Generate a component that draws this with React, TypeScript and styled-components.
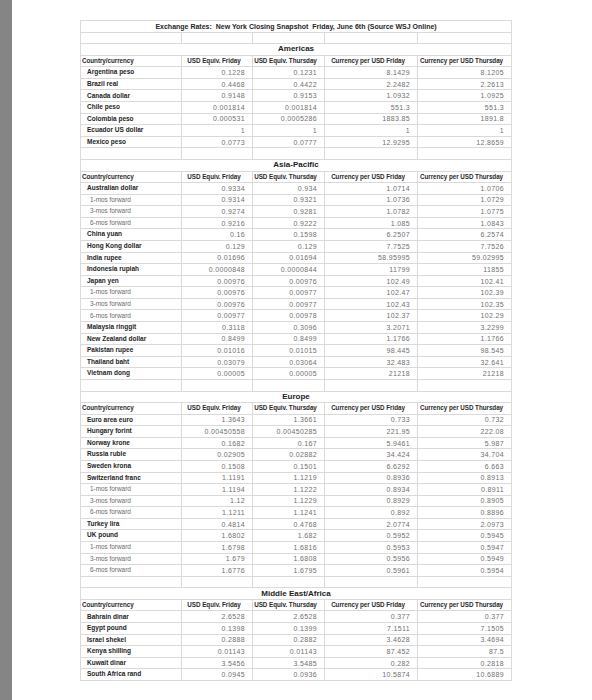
import React from 'react';
import styled, { createGlobalStyle } from 'styled-components';

const GlobalStyle = createGlobalStyle`
  html, body {
    margin: 0;
    padding: 0;
    background: #ffffff;
  }
  body {
    font-family: "Liberation Sans", Arial, sans-serif;
  }
`;

type Row = {
  label: string;
  sub?: boolean;
  values: string[];
};

type Section = {
  name: string;
  rows: Row[];
};

const sections: Section[] = [
  {
    name: 'Americas',
    rows: [
      { label: 'Argentina peso', values: ['0.1228', '0.1231', '8.1429', '8.1205'] },
      { label: 'Brazil real', values: ['0.4468', '0.4422', '2.2482', '2.2613'] },
      { label: 'Canada dollar', values: ['0.9148', '0.9153', '1.0932', '1.0925'] },
      { label: 'Chile peso', values: ['0.001814', '0.001814', '551.3', '551.3'] },
      { label: 'Colombia peso', values: ['0.000531', '0.0005286', '1883.85', '1891.8'] },
      { label: 'Ecuador US dollar', values: ['1', '1', '1', '1'] },
      { label: 'Mexico peso', values: ['0.0773', '0.0777', '12.9295', '12.8659'] },
    ],
  },
  {
    name: 'Asia-Pacific',
    rows: [
      { label: 'Australian dollar', values: ['0.9334', '0.934', '1.0714', '1.0706'] },
      { label: '1-mos forward', sub: true, values: ['0.9314', '0.9321', '1.0736', '1.0729'] },
      { label: '3-mos forward', sub: true, values: ['0.9274', '0.9281', '1.0782', '1.0775'] },
      { label: '6-mos forward', sub: true, values: ['0.9216', '0.9222', '1.085', '1.0843'] },
      { label: 'China yuan', values: ['0.16', '0.1598', '6.2507', '6.2574'] },
      { label: 'Hong Kong dollar', values: ['0.129', '0.129', '7.7525', '7.7526'] },
      { label: 'India rupee', values: ['0.01696', '0.01694', '58.95995', '59.02995'] },
      { label: 'Indonesia rupiah', values: ['0.0000848', '0.0000844', '11799', '11855'] },
      { label: 'Japan yen', values: ['0.00976', '0.00976', '102.49', '102.41'] },
      { label: '1-mos forward', sub: true, values: ['0.00976', '0.00977', '102.47', '102.39'] },
      { label: '3-mos forward', sub: true, values: ['0.00976', '0.00977', '102.43', '102.35'] },
      { label: '6-mos forward', sub: true, values: ['0.00977', '0.00978', '102.37', '102.29'] },
      { label: 'Malaysia ringgit', values: ['0.3118', '0.3096', '3.2071', '3.2299'] },
      { label: 'New Zealand dollar', values: ['0.8499', '0.8499', '1.1766', '1.1766'] },
      { label: 'Pakistan rupee', values: ['0.01016', '0.01015', '98.445', '98.545'] },
      { label: 'Thailand baht', values: ['0.03079', '0.03064', '32.483', '32.641'] },
      { label: 'Vietnam dong', values: ['0.00005', '0.00005', '21218', '21218'] },
    ],
  },
  {
    name: 'Europe',
    rows: [
      { label: 'Euro area euro', values: ['1.3643', '1.3661', '0.733', '0.732'] },
      { label: 'Hungary forint', values: ['0.00450558', '0.00450285', '221.95', '222.08'] },
      { label: 'Norway krone', values: ['0.1682', '0.167', '5.9461', '5.987'] },
      { label: 'Russia ruble', values: ['0.02905', '0.02882', '34.424', '34.704'] },
      { label: 'Sweden krona', values: ['0.1508', '0.1501', '6.6292', '6.663'] },
      { label: 'Switzerland franc', values: ['1.1191', '1.1219', '0.8936', '0.8913'] },
      { label: '1-mos forward', sub: true, values: ['1.1194', '1.1222', '0.8934', '0.8911'] },
      { label: '3-mos forward', sub: true, values: ['1.12', '1.1229', '0.8929', '0.8905'] },
      { label: '6-mos forward', sub: true, values: ['1.1211', '1.1241', '0.892', '0.8896'] },
      { label: 'Turkey lira', values: ['0.4814', '0.4768', '2.0774', '2.0973'] },
      { label: 'UK pound', values: ['1.6802', '1.682', '0.5952', '0.5945'] },
      { label: '1-mos forward', sub: true, values: ['1.6798', '1.6816', '0.5953', '0.5947'] },
      { label: '3-mos forward', sub: true, values: ['1.679', '1.6808', '0.5956', '0.5949'] },
      { label: '6-mos forward', sub: true, values: ['1.6776', '1.6795', '0.5961', '0.5954'] },
    ],
  },
  {
    name: 'Middle East/Africa',
    rows: [
      { label: 'Bahrain dinar', values: ['2.6528', '2.6528', '0.377', '0.377'] },
      { label: 'Egypt pound', values: ['0.1398', '0.1399', '7.1511', '7.1505'] },
      { label: 'Israel shekel', values: ['0.2888', '0.2882', '3.4628', '3.4694'] },
      { label: 'Kenya shilling', values: ['0.01143', '0.01143', '87.452', '87.5'] },
      { label: 'Kuwait dinar', values: ['3.5456', '3.5485', '0.282', '0.2818'] },
      { label: 'South Africa rand', values: ['0.0945', '0.0936', '10.5874', '10.6889'] },
    ],
  },
];

const headers = [
  'Country/currency',
  'USD Equiv. Friday',
  'USD Equiv. Thursday',
  'Currency per USD Friday',
  'Currency per USD Thursday',
];

const colWidths = [101, 71, 72, 93, 94];

const Page = styled.div`
  display: flex;
  min-height: 700px;
`;

const ScanEdge = styled.div`
  width: 12px;
  flex-shrink: 0;
  background: #858585;
`;

const Sheet = styled.div`
  flex: 1;
  padding: 20px 0 0 68px;
`;

const Table = styled.table`
  width: 431px;
  table-layout: fixed;
  border-collapse: collapse;
  border: 1px solid #d6d6d6;
`;

const Cell = styled.td<{ $align?: 'left' | 'right' | 'center' }>`
  height: 11.58px;
  padding: 0 7px;
  box-sizing: border-box;
  border: 1px solid #dadada;
  line-height: 1;
  text-align: ${(p) => p.$align || 'left'};
  white-space: nowrap;
  overflow: hidden;
`;

const TitleCell = styled(Cell)`
  font-size: 7px;
  font-weight: 700;
  color: #262626;
`;

const SectionCell = styled(Cell)`
  font-size: 8px;
  font-weight: 700;
  color: #1c1c1c;
`;

const HeadCell = styled(Cell)`
  font-size: 6.3px;
  font-weight: 700;
  color: #2a2a2a;
  letter-spacing: -0.05px;
  padding-left: 1px;
`;

const NameCell = styled(Cell)<{ $sub?: boolean }>`
  font-size: ${(p) => (p.$sub ? '6.4px' : '6.5px')};
  font-weight: ${(p) => (p.$sub ? 400 : 700)};
  color: ${(p) => (p.$sub ? '#6a6a6a' : '#242424')};
  padding-left: ${(p) => (p.$sub ? '9px' : '6px')};
`;

const ValueCell = styled(Cell)`
  font-size: 7px;
  color: #707070;
  letter-spacing: 0.35px;
`;

function BlankRow() {
  return (
    <tr>
      {colWidths.map((_, i) => (
        <Cell key={i} />
      ))}
    </tr>
  );
}

function SectionBlock({ section }: { section: Section }) {
  return (
    <>
      <BlankRow />
      <tr>
        <SectionCell colSpan={5} $align="center">
          {section.name}
        </SectionCell>
      </tr>
      <tr>
        {headers.map((h, i) => (
          <HeadCell key={h} $align={i === 0 ? 'left' : 'center'}>
            {h}
          </HeadCell>
        ))}
      </tr>
      {section.rows.map((row, idx) => (
        <tr key={idx}>
          <NameCell $sub={row.sub}>{row.label}</NameCell>
          {row.values.map((v, i) => (
            <ValueCell key={i} $align="right">
              {v}
            </ValueCell>
          ))}
        </tr>
      ))}
    </>
  );
}

export default function App() {
  return (
    <>
      <GlobalStyle />
      <Page>
        <ScanEdge />
        <Sheet>
          <Table>
            <colgroup>
              {colWidths.map((w, i) => (
                <col key={i} style={{ width: w }} />
              ))}
            </colgroup>
            <tbody>
              <tr>
                <TitleCell colSpan={5} $align="center">
                  Exchange Rates:&nbsp; New York Closing Snapshot&nbsp; Friday, June 6th (Source WSJ Online)
                </TitleCell>
              </tr>
              {sections.map((s) => (
                <SectionBlock key={s.name} section={s} />
              ))}
            </tbody>
          </Table>
        </Sheet>
      </Page>
    </>
  );
}
